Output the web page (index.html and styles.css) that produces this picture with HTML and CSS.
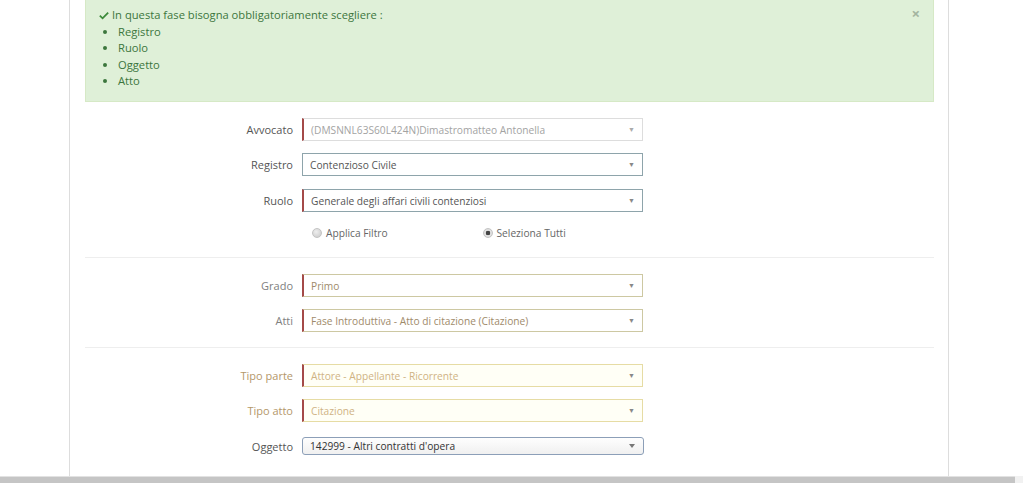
FILE: index.html
```html
<!DOCTYPE html>
<html lang="it">
<head>
<meta charset="utf-8">
<title>Form</title>
<link rel="stylesheet" href="styles.css">
</head>
<body>
<div class="page">
  <div class="panel">
    <div class="alert">
      <span class="close">×</span>
      <div class="alert-title"><svg class="check" viewBox="0 0 12 10" width="10" height="9"><path d="M1 5.2 L4.3 8.4 L11 1.6" fill="none" stroke="#3c8a3a" stroke-width="2.2"/></svg>In questa fase bisogna obbligatoriamente scegliere :</div>
      <ul class="alert-list">
        <li>Registro</li>
        <li>Ruolo</li>
        <li>Oggetto</li>
        <li>Atto</li>
      </ul>
    </div>

    <div class="section s1">
      <div class="row">
        <label class="lbl">Avvocato</label>
        <div class="sel req disabled"><span class="val">(DMSNNL63S60L424N)Dimastromatteo Antonella</span><span class="arr">▼</span></div>
      </div>
      <div class="row">
        <label class="lbl">Registro</label>
        <div class="sel blue"><span class="val">Contenzioso Civile</span><span class="arr">▼</span></div>
      </div>
      <div class="row">
        <label class="lbl">Ruolo</label>
        <div class="sel blue req"><span class="val">Generale degli affari civili contenziosi</span><span class="arr">▼</span></div>
      </div>
      <div class="radio-row">
        <div class="radio-col"><span class="radio"></span>Applica Filtro</div>
        <div class="radio-col"><span class="radio on"></span>Seleziona Tutti</div>
      </div>
    </div>

    <div class="divider"></div>

    <div class="section s2">
      <div class="row">
        <label class="lbl grey">Grado</label>
        <div class="sel khaki req"><span class="val">Primo</span><span class="arr">▼</span></div>
      </div>
      <div class="row">
        <label class="lbl grey">Atti</label>
        <div class="sel khaki req"><span class="val">Fase Introduttiva - Atto di citazione (Citazione)</span><span class="arr">▼</span></div>
      </div>
    </div>

    <div class="divider"></div>

    <div class="section s3">
      <div class="row">
        <label class="lbl tan">Tipo parte</label>
        <div class="sel yellow req"><span class="val">Attore - Appellante - Ricorrente</span><span class="arr">▼</span></div>
      </div>
      <div class="row">
        <label class="lbl tan">Tipo atto</label>
        <div class="sel yellow req"><span class="val">Citazione</span><span class="arr">▼</span></div>
      </div>
      <div class="row row-native">
        <label class="lbl">Oggetto</label>
        <div class="native"><span class="val">142999 - Altri contratti d'opera</span><span class="narr"></span></div>
      </div>
    </div>
  </div>
  <div class="hbar"><div class="hbar-track"></div><div class="hbar-end"></div></div>
</div>
</body>
</html>
```

FILE: styles.css
```css
html, body {
  margin: 0;
  padding: 0;
  background: #fff;
}
body {
  font-family: "Open Sans", "Liberation Sans", sans-serif;
  font-size: 11px;
  color: #555;
  overflow: hidden;
}
.page {
  width: 1023px;
  height: 483px;
  display: flex;
  flex-direction: column;
}
.panel {
  box-sizing: border-box;
  margin-left: 69px;
  width: 880px;
  height: 476px;
  border-left: 1px solid #ddd;
  border-right: 1px solid #ddd;
  padding: 0 14px 0 15px;
}
.alert {
  position: relative;
  box-sizing: border-box;
  height: 102px;
  background: #dff0d8;
  border: 1px solid #d6e9c6;
  border-top: none;
  color: #3c763d;
  padding: 7px 14px 0 13px;
  line-height: 16.5px;
  font-size: 11.2px;
}
.close {
  position: absolute;
  right: 13px;
  top: 4px;
  font-size: 15px;
  font-weight: bold;
  color: #a3b4a0;
  line-height: 18px;
}
.check {
  margin-right: 3px;
  vertical-align: -1px;
}
.alert-list {
  margin: 0;
  padding: 0 0 0 19px;
}
.section {
  display: flex;
  flex-direction: column;
}
.s1 { padding-top: 16px; }
.s2 { padding-top: 16px; padding-bottom: 15px; }
.s3 { padding-top: 16px; }
.row {
  display: flex;
  align-items: center;
  height: 23px;
  margin-bottom: 12px;
}
.section .row:last-child { margin-bottom: 0; }
.s1 .row:nth-child(3) { margin-top: 1px; }
.lbl {
  width: 208px;
  text-align: right;
  padding-right: 9px;
  color: #555;
  font-size: 11px;
}
.lbl.grey { color: #808080; }
.lbl.tan { color: #b4976a; }
.sel {
  box-sizing: border-box;
  width: 341px;
  height: 23px;
  border: 1px solid #ddd;
  background: #fff;
  display: flex;
  align-items: center;
  justify-content: space-between;
  padding: 0 7px 0 7px;
  font-size: 10.2px;
  color: #555;
}
.sel.req {
  border-left: 2px solid #a44a48;
}
.sel.disabled .val { color: #a3a3a3; }
.sel.blue { border-color: #8ea4ab; }
.sel.blue.req { border-left-color: #a44a48; }
.sel.khaki { border-color: #cdc8a2; }
.sel.khaki.req { border-left-color: #a44a48; }
.sel.khaki .val { color: #a08a6a; }
.sel.yellow { border-color: #e6dca4; background: #fffff6; }
.sel.yellow.req { border-left-color: #a44a48; }
.sel.yellow .val { color: #cfb384; }
.arr {
  font-size: 7px;
  color: #888;
}
.sel.disabled .arr { color: #aaa; }
.radio-row {
  display: flex;
  margin-left: 217px;
  width: 341px;
  height: 16px;
  margin-top: 1px;
  margin-bottom: 16px;
  align-items: center;
  font-size: 10.2px;
  color: #666;
}
.radio-col {
  width: 171px;
  display: flex;
  align-items: center;
  padding-left: 10px;
}
.radio {
  box-sizing: border-box;
  width: 10px;
  height: 10px;
  border-radius: 50%;
  border: 1px solid #c4c4c4;
  background: radial-gradient(circle at 40% 35%, #eeeeee, #c8c8c8);
  margin-right: 4px;
}
.radio.on {
  background: radial-gradient(circle, #444 0 2px, #e6e6e6 2.6px, #cfcfcf 100%);
}
.divider {
  height: 1px;
  background: #eee;
}
.row-native {
  height: 18px;
  margin-top: 3px;
}
.native {
  box-sizing: border-box;
  width: 342px;
  height: 18px;
  border: 1px solid #8c9fb8;
  border-radius: 3px;
  background: linear-gradient(#fefefe, #f0f0f0);
  display: flex;
  align-items: center;
  justify-content: space-between;
  padding: 0 8px 0 7px;
  font-size: 10.2px;
  color: #333;
}
.narr {
  width: 0;
  height: 0;
  border-left: 3.5px solid transparent;
  border-right: 3.5px solid transparent;
  border-top: 4px solid #777;
}
.hbar {
  display: flex;
  height: 7px;
}
.hbar-track {
  width: 1015px;
  background: #c5c5c5;
  border-top: 1px solid #e2e2e2;
}
.hbar-end {
  flex: 1;
  background: #f1f1f1;
}
```
